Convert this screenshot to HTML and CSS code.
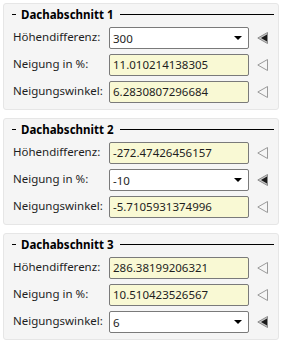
FILE: index.html
```html
<!DOCTYPE html>
<html lang="de">
  <head>
    <meta charset="utf-8" />
    <title>Dachabschnitte</title>
    <link rel="stylesheet" href="styles.css">
  </head>
  <body>
    <div class="panel">
      <div class="panel-title"><span class="dash"></span><span class="title">Dachabschnitt 1</span><span class="rule"></span></div>
      <div class="row">
        <span class="label">Höhendifferenz:</span>
        <div class="combo"><span>300</span><span class="arrow"></span></div>
        <svg class="pin" width="12" height="12" viewBox="0 0 12 12"><polygon points="10.5,0.5 0.8,6 10.5,11.5" fill="#c8c8c8" stroke="#8c8c8c" /><polygon points="10,2.5 4,6 10,9.5" fill="#1a1a1a" /></svg>
      </div>
      <div class="row">
        <span class="label">Neigung in %:</span>
        <div class="field">11.010214138305</div>
        <svg class="pin" width="12" height="12" viewBox="0 0 12 12"><polygon points="10.5,0.5 0.8,6 10.5,11.5" fill="none" stroke="#9a9a9a" /></svg>
      </div>
      <div class="row">
        <span class="label">Neigungswinkel:</span>
        <div class="field">6.2830807296684</div>
        <svg class="pin" width="12" height="12" viewBox="0 0 12 12"><polygon points="10.5,0.5 0.8,6 10.5,11.5" fill="none" stroke="#9a9a9a" /></svg>
      </div>
    </div>

    <div class="panel">
      <div class="panel-title"><span class="dash"></span><span class="title">Dachabschnitt 2</span><span class="rule"></span></div>
      <div class="row">
        <span class="label">Höhendifferenz:</span>
        <div class="field">-272.47426456157</div>
        <svg class="pin" width="12" height="12" viewBox="0 0 12 12"><polygon points="10.5,0.5 0.8,6 10.5,11.5" fill="none" stroke="#9a9a9a" /></svg>
      </div>
      <div class="row">
        <span class="label">Neigung in %:</span>
        <div class="combo"><span>-10</span><span class="arrow"></span></div>
        <svg class="pin" width="12" height="12" viewBox="0 0 12 12"><polygon points="10.5,0.5 0.8,6 10.5,11.5" fill="#c8c8c8" stroke="#8c8c8c" /><polygon points="10,2.5 4,6 10,9.5" fill="#1a1a1a" /></svg>
      </div>
      <div class="row">
        <span class="label">Neigungswinkel:</span>
        <div class="field">-5.7105931374996</div>
        <svg class="pin" width="12" height="12" viewBox="0 0 12 12"><polygon points="10.5,0.5 0.8,6 10.5,11.5" fill="none" stroke="#9a9a9a" /></svg>
      </div>
    </div>

    <div class="panel">
      <div class="panel-title"><span class="dash"></span><span class="title">Dachabschnitt 3</span><span class="rule"></span></div>
      <div class="row">
        <span class="label">Höhendifferenz:</span>
        <div class="field">286.38199206321</div>
        <svg class="pin" width="12" height="12" viewBox="0 0 12 12"><polygon points="10.5,0.5 0.8,6 10.5,11.5" fill="none" stroke="#9a9a9a" /></svg>
      </div>
      <div class="row">
        <span class="label">Neigung in %:</span>
        <div class="field">10.510423526567</div>
        <svg class="pin" width="12" height="12" viewBox="0 0 12 12"><polygon points="10.5,0.5 0.8,6 10.5,11.5" fill="none" stroke="#9a9a9a" /></svg>
      </div>
      <div class="row">
        <span class="label">Neigungswinkel:</span>
        <div class="combo"><span>6</span><span class="arrow"></span></div>
        <svg class="pin" width="12" height="12" viewBox="0 0 12 12"><polygon points="10.5,0.5 0.8,6 10.5,11.5" fill="#c8c8c8" stroke="#8c8c8c" /><polygon points="10,2.5 4,6 10,9.5" fill="#1a1a1a" /></svg>
      </div>
    </div>
  </body>
</html>
```

FILE: styles.css
```css
body {
  margin: 0;
  padding: 3px 4px 0 3px;
  background: #ffffff;
  font-family: "Noto Sans", "Open Sans", sans-serif;
  font-size: 11.5px;
  color: #1e1e1e;
}
.panel {
  background: #f5f5f5;
  border: 1px solid #e6e6e6;
  border-radius: 3px;
  height: 107px;
  margin-bottom: 8px;
  box-sizing: border-box;
  padding: 0 4px 0 8px;
}
.panel-title {
  display: flex;
  align-items: center;
  height: 18px;
  padding-top: 2px;
  box-sizing: border-box;
}
.dash {
  width: 4px;
  height: 1px;
  background: #000;
  margin-right: 5px;
}
.title {
  font-weight: bold;
  color: #000;
  font-size: 11.5px;
}
.rule {
  flex: 1;
  height: 1px;
  background: #000;
  margin-left: 6px;
}
.row {
  display: flex;
  align-items: center;
  height: 22px;
  margin-top: 5px;
}
.label {
  width: 96px;
  padding-left: 1px;
  margin-top: -3px;
}
.field,
.combo {
  width: 140px;
  height: 22px;
  box-sizing: border-box;
  border: 1px solid #7a7a7a;
  border-radius: 2px;
  padding: 2px 4px 0 3px;
}
.field {
  background: #f9f9d4;
}
.combo {
  background: #fff;
  display: flex;
  justify-content: space-between;
  align-items: center;
  padding-top: 0;
}
.arrow {
  width: 0;
  height: 0;
  border-left: 4px solid transparent;
  border-right: 4px solid transparent;
  border-top: 4px solid #000;
  margin-right: 2px;
}
.pin {
  margin-left: 8px;
}
```
